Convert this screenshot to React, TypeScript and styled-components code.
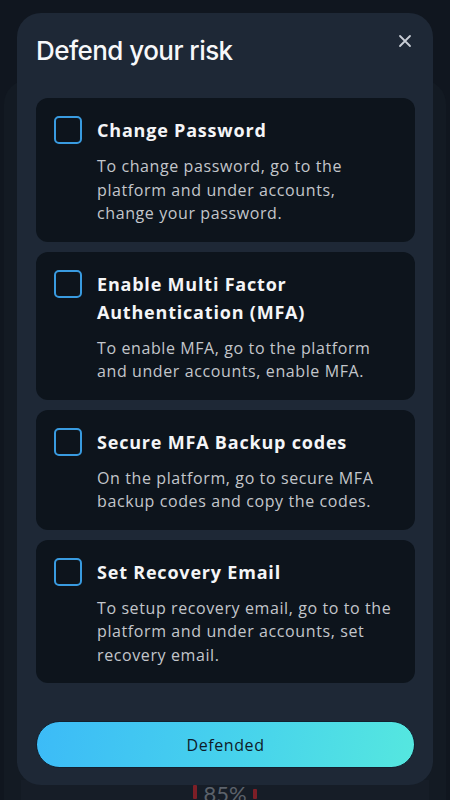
import React from 'react';
import styled, { createGlobalStyle } from 'styled-components';

const GlobalStyle = createGlobalStyle`
  html, body {
    margin: 0;
    padding: 0;
    background: #10161f;
    overflow: hidden;
  }
  * {
    box-sizing: border-box;
  }
`;

const Screen = styled.div`
  position: relative;
  width: 450px;
  height: 800px;
  overflow: hidden;
  background: #10161f;
  font-family: 'Open Sans', 'Liberation Sans', sans-serif;
`;

// page that sits dimmed behind the dialog
const Backdrop = styled.div`
  height: 100%;
  padding: 80px 4px 0;
  display: flex;
  flex-direction: column;
`;

const BgPanel = styled.div`
  flex: 1;
  border-radius: 24px 24px 0 0;
  background: #131a23;
  padding: 0 17px;
  display: flex;
  flex-direction: column;
  justify-content: flex-end;
`;

const BgGauge = styled.div`
  height: 20px;
  background: #161d27;
  display: flex;
  justify-content: center;
  align-items: flex-start;
  gap: 6px;
  padding-top: 3px;
`;

const GaugeBar = styled.span<{ $h: number }>`
  width: 4px;
  height: ${(p) => p.$h}px;
  margin-top: ${(p) => 16 - p.$h}px;
  border-radius: 1px;
  background: #7d1f27;
`;

const GaugeValue = styled.span`
  font-family: 'Lato', 'Liberation Sans', sans-serif;
  font-size: 22px;
  line-height: 22px;
  color: #5c626b;
`;

const Modal = styled.div`
  position: absolute;
  top: 13px;
  left: 17px;
  width: 416px;
  height: 772px;
  border-radius: 24px;
  background: #1e2836;
  padding: 22px 18px 17px 19px;
  display: flex;
  flex-direction: column;
`;

const Header = styled.div`
  display: flex;
  justify-content: space-between;
  align-items: flex-start;
`;

const Title = styled.h1`
  margin: 0;
  font-family: 'Inter', 'Liberation Sans', sans-serif;
  font-size: 26px;
  font-weight: 500;
  line-height: 32px;
  letter-spacing: -0.55px;
  color: #f7f8fa;
`;

const CloseButton = styled.button`
  width: 14px;
  height: 14px;
  margin: -1px 3px 0 0;
  padding: 0;
  border: none;
  background: none;
  color: #c9ced6;
  cursor: pointer;
  display: flex;
`;

const CardList = styled.div`
  margin-top: 31px;
  display: flex;
  flex-direction: column;
  gap: 10px;
`;

const Card = styled.div`
  display: grid;
  grid-template-columns: 28px 1fr;
  column-gap: 15px;
  padding: 18px 18px 16px 18px;
  border-radius: 12px;
  background: #0d141c;
`;

const Checkbox = styled.span`
  width: 28px;
  height: 28px;
  border: 2px solid #399be0;
  border-radius: 5px;
`;

const CardBody = styled.div`
  display: flex;
  flex-direction: column;
`;

const CardTitle = styled.div`
  font-size: 18px;
  font-weight: 700;
  line-height: 28px;
  letter-spacing: 0.8px;
  color: #f4f5f7;
`;

const CardText = styled.div`
  margin-top: 11px;
  font-size: 16px;
  line-height: 23.5px;
  letter-spacing: 0.6px;
  color: #c3c6cb;
  white-space: nowrap;
`;

const PrimaryButton = styled.button`
  margin-top: auto;
  height: 47px;
  border-radius: 24px;
  border: 1px solid #12202f;
  background: linear-gradient(100deg, #3cbbf7 0%, #47d3ec 55%, #55e7df 100%);
  font-family: 'Open Sans', 'Liberation Sans', sans-serif;
  font-size: 16px;
  letter-spacing: 0.6px;
  color: #0e1b29;
  cursor: pointer;
`;

const steps = [
  {
    title: ['Change Password'],
    text: ['To change password, go to the', 'platform and under accounts,', 'change your password.'],
  },
  {
    title: ['Enable Multi Factor', 'Authentication (MFA)'],
    text: ['To enable MFA, go to the platform', 'and under accounts, enable MFA.'],
  },
  {
    title: ['Secure MFA Backup codes'],
    text: ['On the platform, go to secure MFA', 'backup codes and copy the codes.'],
  },
  {
    title: ['Set Recovery Email'],
    text: ['To setup recovery email, go to to the', 'platform and under accounts, set', 'recovery email.'],
  },
];

const lines = (arr: string[]) =>
  arr.map((l, i) => (
    <React.Fragment key={i}>
      {i > 0 && <br />}
      {l}
    </React.Fragment>
  ));

export default function App() {
  return (
    <Screen>
      <GlobalStyle />
      <Backdrop>
        <BgPanel>
          <BgGauge>
            <GaugeBar $h={14} />
            <GaugeValue>85%</GaugeValue>
            <GaugeBar $h={10} />
          </BgGauge>
        </BgPanel>
      </Backdrop>

      <Modal>
        <Header>
          <Title>Defend your risk</Title>
          <CloseButton aria-label="Close">
            <svg width="14" height="14" viewBox="0 0 14 14" fill="none">
              <path d="M2 2L12 12M12 2L2 12" stroke="currentColor" strokeWidth="1.8" strokeLinecap="round" />
            </svg>
          </CloseButton>
        </Header>

        <CardList>
          {steps.map((s, i) => (
            <Card key={i}>
              <Checkbox />
              <CardBody>
                <CardTitle>{lines(s.title)}</CardTitle>
                <CardText>{lines(s.text)}</CardText>
              </CardBody>
            </Card>
          ))}
        </CardList>

        <PrimaryButton>Defended</PrimaryButton>
      </Modal>
    </Screen>
  );
}
